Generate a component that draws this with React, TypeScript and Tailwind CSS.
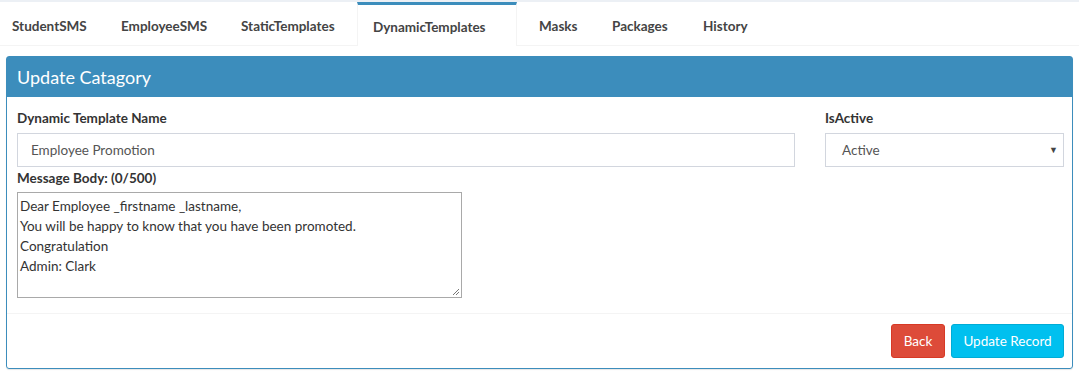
import React from "react";

const tabs: { t: string; w: string; pl: string }[] = [
  { t: "StudentSMS", w: "w-[109px]", pl: "pl-[12px]" },
  { t: "EmployeeSMS", w: "w-[120px]", pl: "pl-[12px]" },
  { t: "StaticTemplates", w: "w-[128px]", pl: "pl-[12px]" },
  { t: "DynamicTemplates", w: "w-[160px]", pl: "pl-[15px]" },
  { t: "Masks", w: "w-[83px]", pl: "pl-[22px]" },
  { t: "Packages", w: "w-[91px]", pl: "pl-[12px]" },
  { t: "History", w: "w-[100px]", pl: "pl-[12px]" },
];

export default function App() {
  return (
    <div className="w-[1079px] h-[376px] bg-white text-[#333] overflow-hidden" style={{ fontFamily: "Lato, 'Open Sans', sans-serif" }}>
      <div className="h-[2px] bg-[#ecf0f5]" />
      <div className="flex h-[44px] border-b border-[#f4f4f4]">
        {tabs.map(({ t, w, pl }) => {
          const active = t === "DynamicTemplates";
          return (
            <div
              key={t}
              className={
                (active
                  ? "border-t-[3px] border-t-[#3c8dbc] border-x border-x-[#f4f4f4] -mb-px bg-white "
                  : "border-t-[3px] border-t-transparent ") +
                "flex items-center pt-[3px] text-[13.5px] font-bold text-[#444] shrink-0 " +
                w +
                " " +
                pl
              }
            >
              {t}
            </div>
          );
        })}
      </div>
      <div className="mx-[6px] mt-[10px] border border-[#3c8dbc] rounded-[3px] shadow-[0_1px_1px_rgba(0,0,0,0.1)]">
        <div className="bg-[#3c8dbc] h-[40px] flex items-center px-[10px] text-white text-[18px]">Update Catagory</div>
        <div className="pl-[10px] pr-[8px] pt-[12px] pb-[15px]">
          <div className="flex gap-[30px]">
            <div className="flex-1">
              <div className="text-[13.5px] font-bold mb-[6px] leading-[18px]">Dynamic Template Name</div>
              <div className="h-[34px] border border-[#d2d6de] flex items-center px-[13px] text-[13.5px] text-[#555]">Employee Promotion</div>
            </div>
            <div className="w-[239px]">
              <div className="text-[13.5px] font-bold mb-[6px] leading-[18px]">IsActive</div>
              <div className="h-[34px] border border-[#d2d6de] flex items-center justify-between pl-[16px] pr-[5px] text-[13.5px] text-[#555]">
                <span>Active</span>
                <span className="text-[9px] text-[#444]">▼</span>
              </div>
            </div>
          </div>
          <div className="text-[13.5px] font-bold mt-[2px] mb-[5px] leading-[18px]">Message Body: (0/500)</div>
          <div className="relative w-[445px] h-[106px] border border-[#a9a9a9] px-[2px] py-[3px] text-[13.5px] leading-[20px] text-[#333]">
            <div>Dear Employee _firstname _lastname,</div>
            <div>You will be happy to know that you have been promoted.</div>
            <div>Congratulation</div>
            <div>Admin: Clark</div>
            <svg className="absolute right-[1px] bottom-[1px]" width="8" height="8" viewBox="0 0 8 8">
              <path d="M7 1 L1 7 M7 4 L4 7" stroke="#777" strokeWidth="1" />
            </svg>
          </div>
        </div>
        <div className="border-t border-[#f4f4f4] flex justify-end gap-[6px] pl-[9px] pr-[8px] pt-[10px] pb-[10px]">
          <div className="h-[34px] w-[54px] justify-center flex items-center bg-[#dd4b39] border border-[#d73925] rounded-[3px] text-white text-[13.5px]">Back</div>
          <div className="h-[34px] w-[113px] justify-center flex items-center bg-[#00c0ef] border border-[#00acd6] rounded-[3px] text-white text-[13.5px]">Update Record</div>
        </div>
      </div>
    </div>
  );
}
